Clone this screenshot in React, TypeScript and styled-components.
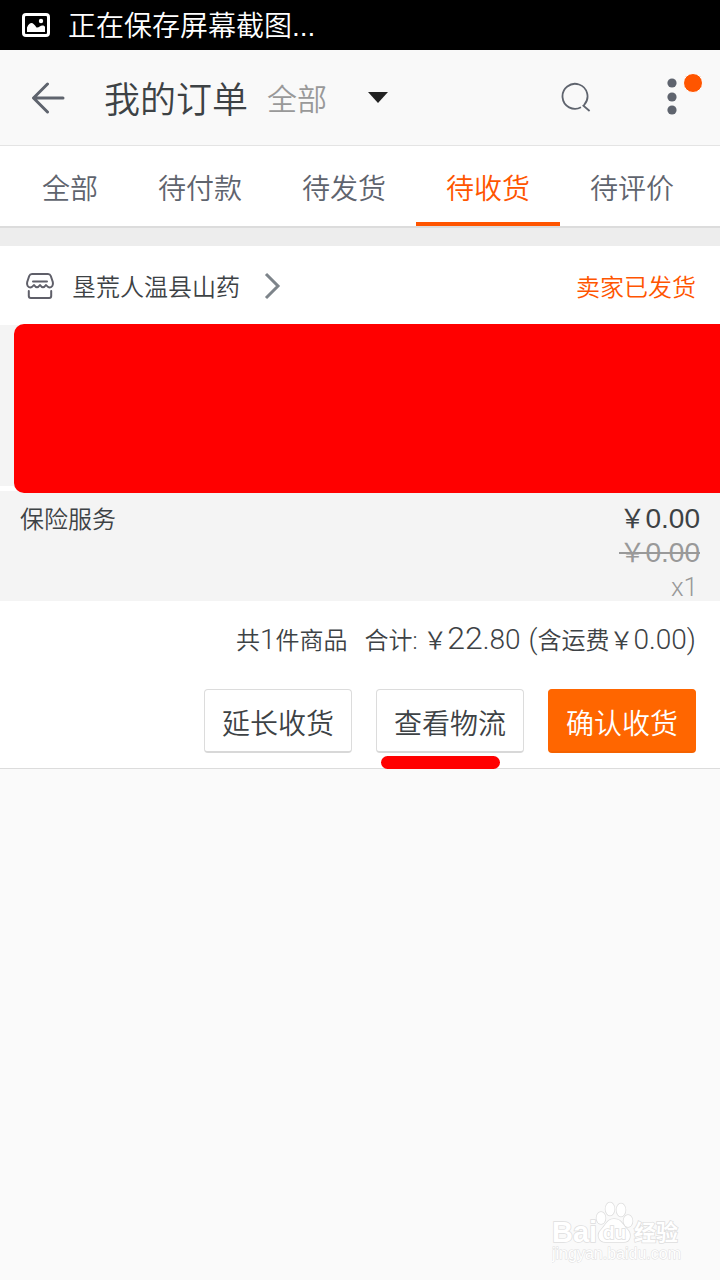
import React from 'react';
import styled, { createGlobalStyle } from 'styled-components';

const GlobalStyle = createGlobalStyle`
  * { box-sizing: border-box; }
  body {
    margin: 0;
    background: #fafafa;
    color: #3d4245;
    font-family: Roboto, "Noto Sans CJK SC", sans-serif;
    font-weight: 350;
  }
  button, select { font: inherit; color: inherit; }
`;

const Page = styled.div`
  display: flex;
  flex-direction: column;
  min-height: 100vh;
`;

const StatusBar = styled.div`
  display: flex;
  align-items: center;
  gap: 18px;
  height: 50px;
  padding: 0 22px;
  background: #000;
  color: #fff;
  font-family: "Liberation Sans", "Noto Sans CJK SC", sans-serif;
  font-size: 28px;
  line-height: 44px;
  & > span { padding-top: 4px; }
`;

const Header = styled.header`
  display: flex;
  align-items: center;
  height: 96px;
  padding: 0 24px;
  background: #f9f9f9;
  border-bottom: 1px solid #e4e4e4;
`;

const IconButton = styled.button`
  position: relative;
  display: flex;
  align-items: center;
  justify-content: center;
  width: 48px;
  height: 48px;
  padding: 0;
  border: 0;
  background: none;
  color: #5f646e;
`;

const Title = styled.h1`
  margin: 0;
  padding: 6px 19px 0 32px;
  font-size: 36px;
  font-weight: inherit;
  line-height: 48px;
`;

const Filter = styled.label`
  display: grid;
  align-items: center;
  margin-right: auto;
  & > * { grid-area: 1 / 1; }
  & > svg { justify-self: end; pointer-events: none; }
`;

const FilterSelect = styled.select`
  width: 121px;
  height: 48px;
  padding: 4px 0 0;
  border: 0;
  appearance: none;
  background: none;
  color: #999;
  font-size: 30px;
`;

const Actions = styled.div`
  display: flex;
  gap: 48px;
  padding-bottom: 2px;
`;

const Badge = styled.span`
  position: absolute;
  top: 0;
  right: -7px;
  width: 20px;
  height: 20px;
  border: 1px solid #fff;
  border-radius: 50%;
  background: #ff5500;
`;

const Tabs = styled.nav`
  display: flex;
  height: 82px;
  margin-bottom: 18px;
  padding: 0 16px 0 12px;
  background: #fff;
  border-bottom: 2px solid #dcdcdc;
`;

const Tab = styled.a<{ $active?: boolean }>`
  display: flex;
  flex: 1 1 auto;
  align-items: center;
  justify-content: center;
  padding: 6px 8px 0;
  border-bottom: 4px solid ${p => (p.$active ? '#ff5500' : 'transparent')};
  color: ${p => (p.$active ? '#ff5500' : '#5f646e')};
  font-size: 28px;
  text-decoration: none;
  white-space: nowrap;
`;

const List = styled.div`
  background: #ededed;
`;

const Order = styled.article`
  background: #fff;
  border-bottom: 1px solid #dcdcdc;
`;

const ShopRow = styled.div`
  display: flex;
  align-items: center;
  justify-content: space-between;
  height: 79px;
  padding: 0 24px;
  font-size: 24px;
`;

const ShopLink = styled.a`
  display: flex;
  align-items: center;
  color: inherit;
  text-decoration: none;
  & > span { margin: 0 24px 0 16px; }
`;

const ShopStatus = styled.span`
  color: #ff5500;
`;

const Product = styled.div`
  position: relative;
  height: 161px;
  margin-bottom: 5px;
  background: #f4f4f4;
`;

const Cover = styled.div`
  position: absolute;
  inset: -1px 0 -7px 14px;
  border-radius: 10px 0 0 10px;
  background: #f00;
`;

const Service = styled.div`
  display: flex;
  justify-content: space-between;
  height: 110px;
  padding: 11px 20px 0;
  background: #f4f4f4;
  font-size: 24px;
  line-height: 36px;
`;

const Prices = styled.div`
  display: flex;
  flex-direction: column;
  align-items: flex-end;
  color: #999;
`;

const Price = styled.span`
  color: #3d4245;
  font-family: "Liberation Sans", "Noto Sans CJK SC", sans-serif;
  font-size: 28px;
  font-weight: 400;
  line-height: 33px;
`;

const OldPrice = styled(Price).attrs({ as: 's' })`
  color: #999;
  text-decoration: none;
  background: linear-gradient(#999, #999) 0 center / 100% 2px no-repeat;
`;

const Yen = styled.span`
  font-size: 26px;
`;

const Count = styled.span`
  padding-right: 2px;
  font-size: 26px;
  line-height: 34px;
`;

const Total = styled.p`
  display: flex;
  justify-content: flex-end;
  align-items: baseline;
  height: 88px;
  margin: 0;
  padding: 13px 24px 0;
  font-size: 24px;
  line-height: 48px;
  white-space: pre;
`;

const Num = styled.span<{ $large?: boolean }>`
  font-size: ${p => (p.$large ? 32 : 28)}px;
`;

const Sum = styled.span`
  margin: 0 8px 0 17px;
`;

const Buttons = styled.div`
  display: flex;
  justify-content: flex-end;
  gap: 24px;
  padding: 0 24px 15px;
`;

const Slot = styled.div`
  position: relative;
`;

const ActionButton = styled.button<{ $primary?: boolean }>`
  width: 148px;
  height: 64px;
  padding: 2px 0 0;
  border: 1px solid ${p => (p.$primary ? '#ff6600' : '#dcdcdc')};
  border-bottom-width: 2px;
  border-bottom-color: ${p => (p.$primary ? '#f56200' : '#d8d8d8')};
  border-radius: 4px;
  background: ${p => (p.$primary ? '#ff6600' : '#fff')};
  color: ${p => (p.$primary ? '#fff' : '#3d4245')};
  font-size: 28px;
`;

const Marker = styled.span`
  position: absolute;
  top: 67px;
  left: 5px;
  width: 119px;
  height: 13px;
  border-radius: 7px;
  background: #f00;
`;

const Footer = styled.footer`
  display: flex;
  justify-content: flex-end;
  margin-top: auto;
  padding: 0 36px 16px;
`;

const tabs = ['全部', '待付款', '待发货', '待收货', '待评价'];

const PictureIcon = () => (
  <svg width="28" height="24" viewBox="0 0 28 24">
    <rect x="1.5" y="1.5" width="25" height="21" rx="2.5" fill="none" stroke="#fff" strokeWidth="3" />
    <path d="M5 19V14.500C6.500 11 8 10 9.500 10S12.500 11.500 14.500 14.500C17 15 18 12.500 20.500 12.500C22 12.500 22.500 13 23 14V19Z" fill="#fff" />
    <circle cx="19" cy="8" r="2.200" fill="#fff" />
  </svg>
);

const BackIcon = () => (
  <svg width="34" height="32" viewBox="0 0 34 32" fill="none" stroke="currentColor" strokeWidth="3" strokeLinecap="round" strokeLinejoin="round">
    <path d="M16.500 2 2.500 16 16.500 30M3 16H32" />
  </svg>
);

const SearchIcon = () => (
  <svg width="30" height="30" viewBox="0 0 30 30" fill="none" stroke="currentColor" strokeWidth="1.8">
    <path d="M20 25.300A12.500 12.500 0 1 1 23.200 22.800L22.400 23.600L28.600 29" />
  </svg>
);

const MoreIcon = () => (
  <svg width="10" height="38" viewBox="0 0 10 38" fill="currentColor">
    <circle cx="5" cy="5" r="4.600" />
    <circle cx="5" cy="19" r="4.600" />
    <circle cx="5" cy="32" r="4.600" />
  </svg>
);

const ShopIcon = () => (
  <svg width="32" height="28" viewBox="0 0 32 28" fill="none" stroke="#5f5f69" strokeWidth="2" strokeLinejoin="round" strokeLinecap="round">
    <path d="M8 2H24Q26 2 26.800 4L28.800 10C29.500 13 28 15.500 25.800 15.500Q24 15.500 22 13Q19 17.500 16 13Q13 17.500 10 13Q8 15.500 6.200 15.500C4 15.500 2.500 13 3.200 10L5.200 4Q6 2 8 2Z" />
    <path d="M9 9.500H23M4.800 19V24Q4.800 26 6.800 26H25.200Q27.200 26 27.200 24V19" />
  </svg>
);

const Watermark = () => (
  <svg width="132" height="64" viewBox="0 0 132 64" fill="#fff" stroke="#dedede" strokeWidth="1.500" paintOrder="stroke" fontFamily="'Liberation Sans', 'Noto Sans CJK SC', sans-serif" fontWeight="700">
    <text x="0" y="42" fontSize="29">Bai</text>
    <ellipse cx="49" cy="18" rx="4.500" ry="6" />
    <ellipse cx="58" cy="9" rx="4.500" ry="6.500" />
    <ellipse cx="69" cy="10" rx="4.500" ry="6.500" />
    <ellipse cx="76" cy="21" rx="4.500" ry="6" />
    <path d="M62 19C55 19 54 25 49 30C44 35 47 43 55 42H70C79 43 80 34 75 29C70 24 69 19 62 19Z" />
    <text x="51" y="39" fontSize="19">du</text>
    <text x="82" y="40" fontSize="22">经验</text>
    <text x="0" y="59" fontSize="16" fontWeight="400" strokeWidth="1">jingyan.baidu.com</text>
  </svg>
);

export default function App() {
  return (
    <Page>
      <GlobalStyle />
      <StatusBar>
        <PictureIcon />
        <span>正在保存屏幕截图...</span>
      </StatusBar>
      <Header>
        <IconButton aria-label="返回"><BackIcon /></IconButton>
        <Title>我的订单</Title>
        <Filter>
          <FilterSelect aria-label="订单筛选">
            <option>全部</option>
          </FilterSelect>
          <svg width="20" height="12" viewBox="0 0 20 12"><path d="M0 0H20L10 11Z" fill="#222" /></svg>
        </Filter>
        <Actions>
          <IconButton aria-label="搜索"><SearchIcon /></IconButton>
          <IconButton aria-label="更多"><MoreIcon /><Badge /></IconButton>
        </Actions>
      </Header>
      <List>
        <Tabs>
          {tabs.map(t => (
            <Tab key={t} href="#" $active={t === '待收货'}>{t}</Tab>
          ))}
        </Tabs>
        <Order>
          <ShopRow>
            <ShopLink href="#">
              <ShopIcon />
              <span>垦荒人温县山药</span>
              <svg width="18" height="28" viewBox="0 0 18 28" fill="none" stroke="#7d848a" strokeWidth="3"><path d="M2 2 14 14 2 26" /></svg>
            </ShopLink>
            <ShopStatus>卖家已发货</ShopStatus>
          </ShopRow>
          <Product><Cover /></Product>
          <Service>
            <span>保险服务</span>
            <Prices>
              <Price><Yen>￥</Yen>0.00</Price>
              <OldPrice><Yen>￥</Yen>0.00</OldPrice>
              <Count>x1</Count>
            </Prices>
          </Service>
          <Total>
            <span>共<Num>1</Num>件商品</span>
            <Sum>合计: ￥<Num $large>22</Num><Num>.80</Num></Sum>
            <span><Num>(</Num>含运费￥<Num>0.00)</Num></span>
          </Total>
          <Buttons>
            <ActionButton>延长收货</ActionButton>
            <Slot>
              <ActionButton>查看物流</ActionButton>
              <Marker />
            </Slot>
            <ActionButton $primary>确认收货</ActionButton>
          </Buttons>
        </Order>
      </List>
      <Footer><Watermark /></Footer>
    </Page>
  );
}
